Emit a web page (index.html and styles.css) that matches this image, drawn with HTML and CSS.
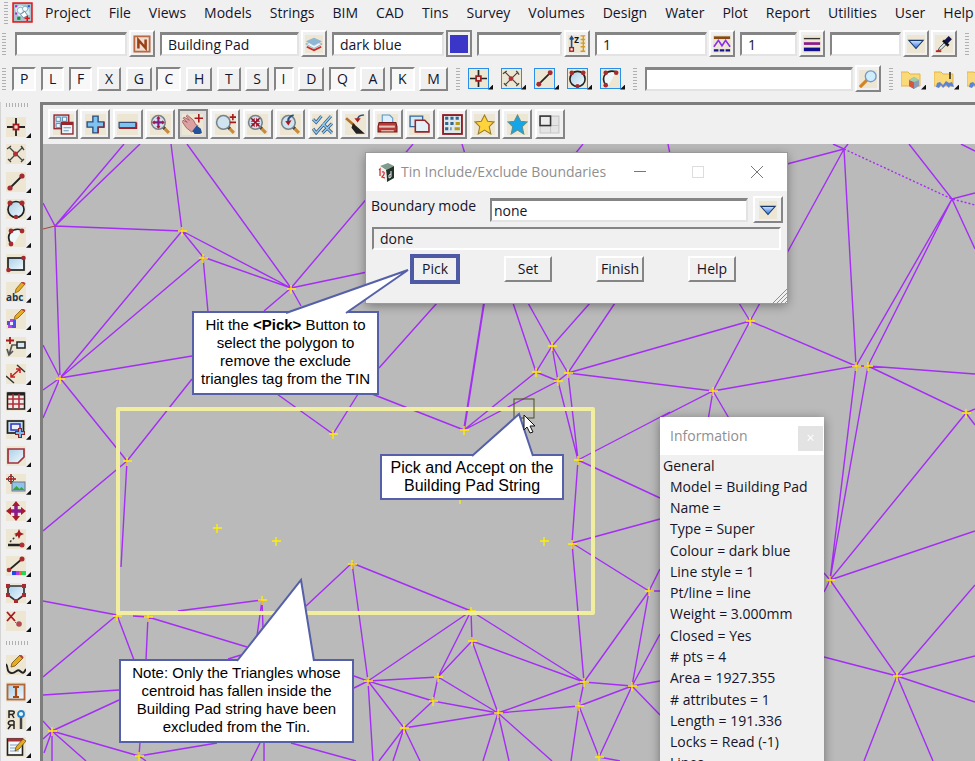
FILE: index.html
```html
<!DOCTYPE html>
<html lang="en">
<head>
<meta charset="utf-8">
<title>Tin Include/Exclude Boundaries</title>
<link rel="stylesheet" href="styles.css">
</head>
<body>
<svg class="defs" aria-hidden="true">
  <defs>
    <linearGradient id="glass" x1="0" y1="0" x2="1" y2="1"><stop offset="0" stop-color="#a9cfe8"/><stop offset="1" stop-color="#f2fafd"/></linearGradient>
    <linearGradient id="arrow" x1="0" y1="0" x2="0" y2="1"><stop offset="0" stop-color="#d4e6ff"/><stop offset="1" stop-color="#2b6fe0"/></linearGradient>
    <g id="bg"><rect width="20" height="20" fill="#ece6d2"/></g>
    <g id="lens"><path d="M12 12l6 6" stroke="#c98a3a" stroke-width="3"/><path d="M12 12l2 2" stroke="#444" stroke-width="3"/><circle cx="8" cy="8" r="6.5" fill="#cfe4f0" stroke="#77838c" stroke-width="1.5"/></g>
    <symbol id="i-app" viewBox="0 0 20 20"><rect x="1" y="1" width="18" height="18" fill="#a9c3cf" stroke="#e01818" stroke-width="1.5"/><path d="M3 6l4-3 5 1 4 3 1 5-5 2-6-1-2-3z" fill="#d8eef5"/><circle cx="8" cy="8" r="3" fill="#f4fbff" stroke="#5d8a9c" stroke-width=".6"/><circle cx="12.500" cy="6.500" r="2.500" fill="#f4fbff" stroke="#5d8a9c" stroke-width=".6"/><path d="M8 12l4-3 3 4-4 2z" fill="#fff" stroke="#3f6f86" stroke-width=".7"/><path d="M3 3h2v2H3zM3 10h2v2H3z" fill="#b11ec9"/><path d="M5 14h3v3H5z" fill="#15903a"/><path d="M14.500 13v5M12 15.500h5" stroke="#e51212" stroke-width="1.500"/><path d="M15 3h2v2h-2z" fill="#2b54d8"/></symbol>
    <symbol id="i-point" viewBox="0 0 20 20"><use href="#bg"/><path d="M10 1v18M1 10h18" stroke="#222" stroke-width="1.8"/><rect x="7.500" y="7.500" width="5" height="5" fill="#f4dcd0" stroke="#a8191f" stroke-width="1.8"/></symbol>
    <symbol id="i-cross" viewBox="0 0 20 20"><use href="#bg"/><path d="M3 3l14 14M17 3L3 17M1 5l4-3M15 2l3 4M2 15l3 3M15 18l3-3" stroke="#444" stroke-width="1.3"/><circle cx="9.500" cy="10" r="2.500" fill="#b03038"/></symbol>
    <symbol id="i-line" viewBox="0 0 20 20"><use href="#bg"/><path d="M4 16L16 4" stroke="#222" stroke-width="1.8"/><circle cx="4" cy="16" r="2.600" fill="#a52a32"/><circle cx="16" cy="4" r="2.600" fill="#a52a32"/></symbol>
    <symbol id="i-circle" viewBox="0 0 20 20"><use href="#bg"/><circle cx="10" cy="10.500" r="8" fill="url(#glass)" stroke="#222" stroke-width="1.700"/><circle cx="4" cy="4" r="2.500" fill="#a52a32"/><circle cx="16" cy="4" r="2.500" fill="#a52a32"/><circle cx="10" cy="18" r="2.200" fill="#a52a32"/></symbol>
    <symbol id="i-arc" viewBox="0 0 20 20"><use href="#bg"/><path d="M5 17C0 9 6 0 16 3L8 17z" fill="#eef7fa"/><path d="M5 17C-1 8 6 0 16 3" fill="none" stroke="#222" stroke-width="1.700"/><circle cx="5" cy="17" r="2.400" fill="#a52a32"/><circle cx="5" cy="4" r="2.400" fill="#a52a32"/><circle cx="16" cy="4" r="2.400" fill="#a52a32"/></symbol>
    <symbol id="i-rect" viewBox="0 0 20 20"><use href="#bg"/><rect x="2" y="4" width="16" height="12" fill="url(#glass)" stroke="#222" stroke-width="1.700"/><circle cx="2.500" cy="16" r="2.300" fill="#a52a32"/><circle cx="17.500" cy="4" r="2.300" fill="#a52a32"/></symbol>
    <symbol id="i-abc" viewBox="0 0 20 20"><use href="#bg"/><path d="M9 11l1-4 6-7 3 2-6 7z" fill="#e6ad20" stroke="#8a5c10" stroke-width=".8"/><path d="M16 0l3 2" stroke="#c04040" stroke-width="2"/><text x="0" y="19" class="glyph-abc">abc</text></symbol>
    <symbol id="i-paint" viewBox="0 0 20 20"><use href="#bg"/><path d="M8 11l1-4 7-7 3 2-7 7z" fill="#e6ad20" stroke="#8a5c10" stroke-width=".8"/><path d="M16 0l3 2" stroke="#c04040" stroke-width="2"/><path d="M1 12h4v4H1zM6 15h4v4H6z" fill="#5a4be0"/><path d="M4 10h4v4H4zM2 16h4v3H2z" fill="#c43ce0"/><path d="M7 11h3v4H7z" fill="#3a5be8"/><path d="M4 13h3v3H4z" fill="#e8eefc"/></symbol>
    <symbol id="i-leader" viewBox="0 0 20 20"><use href="#bg"/><path d="M4 0v7M0 3.500h8" stroke="#a8191f" stroke-width="1.800"/><path d="M11 8H6L3 18M1 12l2 6 4-4" fill="none" stroke="#555" stroke-width="1.700"/><rect x="11" y="5" width="8" height="6" fill="#d5e8f2" stroke="#222" stroke-width="1.500"/></symbol>
    <symbol id="i-dim" viewBox="0 0 20 20"><use href="#bg"/><path d="M0 12l8 7M11 1l8 7" stroke="#333" stroke-width="1.500"/><path d="M5 13L14 5M5 9v4h4M10 5h4v4" fill="none" stroke="#c22222" stroke-width="1.500"/></symbol>
    <symbol id="i-grid" viewBox="0 0 20 20"><use href="#bg"/><rect x="1.500" y="2" width="17" height="16" fill="#f2e9e6" stroke="#222" stroke-width="1.500"/><path d="M2 3h16" stroke="#222" stroke-width="3"/><path d="M2 8h16M2 13h16M7 3v15M13 3v15" stroke="#b0303c" stroke-width="1.600"/></symbol>
    <symbol id="i-view" viewBox="0 0 20 20"><use href="#bg"/><rect x="1.500" y="2" width="16" height="12" fill="#c7dcec" stroke="#222" stroke-width="1.700"/><rect x="5" y="5" width="9" height="6" fill="#e8f2fa" stroke="#2935bd" stroke-width="1.500"/><path d="M14 9v10M9 14h10" stroke="#902028" stroke-width="4"/><path d="M14 10v8M10 14h8" stroke="#74bff0" stroke-width="2"/></symbol>
    <symbol id="i-poly" viewBox="0 0 20 20"><use href="#bg"/><path d="M2 3h16v8l-6 6H2z" fill="url(#glass)" stroke="#a13038" stroke-width="1.700"/></symbol>
    <symbol id="i-image" viewBox="0 0 20 20"><use href="#bg"/><rect x="6" y="8" width="13" height="9" fill="#8dc4ef" stroke="#777"/><path d="M6.500 16l4-4 3 3 2-2 3 3z" fill="#36a43b"/><circle cx="5" cy="5" r="3" fill="none" stroke="#444"/><path d="M5 0v10M0 5h10" stroke="#a8191f" stroke-width="1.500"/></symbol>
    <symbol id="i-move" viewBox="0 0 20 20"><use href="#bg"/><path d="M10 3v14M3 10h14" stroke="#8c1a8a" stroke-width="3.500"/><path d="M10 0l4 5H6zM10 20l4-5H6zM0 10l5-4v8zM20 10l-5-4v8z" fill="#a8192f"/></symbol>
    <symbol id="i-drag" viewBox="0 0 20 20"><use href="#bg"/><path d="M2 16h14" stroke="#222" stroke-width="2.500"/><path d="M4 13l8-8" stroke="#333" stroke-dasharray="2 2" stroke-width="1.500"/><circle cx="16" cy="16" r="2.500" fill="#b03038"/><path d="M13 0l1.500 3.500L18 5l-3.500 1.500L13 10l-1.500-3.500L8 5l3.500-1.500z" fill="#a8191f"/></symbol>
    <symbol id="i-colour" viewBox="0 0 20 20"><use href="#bg"/><path d="M3 14L16 3" stroke="#222" stroke-width="1.700"/><circle cx="3" cy="14" r="2.300" fill="#a52a32"/><circle cx="16" cy="3" r="2.500" fill="#a52a32"/><path d="M6 15h4v4H6z" fill="#1d4de0"/><path d="M10 15h3v4h-3z" fill="#b040e8"/><path d="M13 15h3v4h-3z" fill="#f06a30"/><path d="M16 15h4v4h-4z" fill="#22d850"/></symbol>
    <symbol id="i-shape" viewBox="0 0 20 20"><use href="#bg"/><path d="M2 3h16v9l-8 6-8-6z" fill="url(#glass)" stroke="#333" stroke-width="1.700"/><path d="M0 1h4v4H0zM16 1h4v4h-4zM0 10h4v4H0zM16 10h4v4h-4zM8 16h4v4H8z" fill="#a52a32"/></symbol>
    <symbol id="i-delete" viewBox="0 0 20 20"><use href="#bg"/><path d="M1 1l8 9M9 1l-8 9" stroke="#a8191f" stroke-width="1.800"/><circle cx="13" cy="13" r="2.800" fill="#b04a50"/><path d="M10 11l-1 1" stroke="#666"/></symbol>
    <symbol id="i-draw" viewBox="0 0 20 20"><use href="#bg"/><path d="M0 9c3 5 0 8 5 9s6-5 9-2 4 2 6-2" fill="none" stroke="#222" stroke-width="1.800"/><path d="M5 12l1-4 8-8 3 3-8 8z" fill="#e6ad20" stroke="#6e4c10" stroke-width=".8"/><path d="M14 0l3 3" stroke="#b04040" stroke-width="2"/></symbol>
    <symbol id="i-text" viewBox="0 0 20 20"><use href="#bg"/><rect x="1.500" y="2.500" width="17" height="15" fill="url(#glass)" stroke="#b0653a" stroke-width="1.800"/><path d="M7 5h6M10 5v10M7 15h6" stroke="#a84812" stroke-width="2.200"/></symbol>
    <symbol id="i-find" viewBox="0 0 20 20"><use href="#bg"/><path d="M3 8V1h3c3 0 3 3 0 3.500H3M6 4.500L8 8M8 11C1 10 1 15 5 15h3v-4 8M5 15l-3 4" fill="none" stroke="#222" stroke-width="1.500"/><path d="M15 7v12" stroke="#444" stroke-width="2.500"/><circle cx="15" cy="4" r="3" fill="#e6f7ff" stroke="#1e83cf" stroke-width="1.800"/></symbol>
    <symbol id="i-note" viewBox="0 0 20 20"><use href="#bg"/><rect x="1.500" y="2" width="15" height="16" fill="#f6f9fb" stroke="#222" stroke-width="1.600"/><path d="M2 3h15" stroke="#a83038" stroke-width="3"/><path d="M4 8h9M4 11h7M4 14h9" stroke="#7fa4c0"/><path d="M9 14l1-4 7-8 3 2-7 8z" fill="#e6ad20" stroke="#6e4c10" stroke-width=".8"/></symbol>
    <symbol id="i-name" viewBox="0 0 20 20"><rect x="1.500" y="1.500" width="17" height="17" fill="#f0ddd0" stroke="#b76a45" stroke-width="2"/><path d="M6 15V5.500L14 14.500V5" fill="none" stroke="#9a3f14" stroke-width="2.800"/></symbol>
    <symbol id="i-layers" viewBox="0 0 20 20"><use href="#bg"/><path d="M2 13l8 4 8-4" fill="none" stroke="#d42828" stroke-width="2"/><path d="M1 10l9-4 9 4-9 5z" fill="#eaf3f8" stroke="#8fb0c4"/><path d="M1 7l9-4 9 4-9 5z" fill="#8fb6d2"/></symbol>
    <symbol id="i-z" viewBox="0 0 20 20"><use href="#bg"/><path d="M4 3v11M2 5l2-3 2 3" fill="none" stroke="#1d4f96" stroke-width="1.800"/><rect x="2" y="14" width="4" height="4" fill="#fff" stroke="#a8191f" stroke-width="1.500"/><text x="7" y="9" class="glyph-z">Z</text><path d="M17 1v18M14 1h5M14 5h5M14 9h5M14 13h5M14 18h5" stroke="#d59a28" stroke-width="1.500"/></symbol>
    <symbol id="i-style" viewBox="0 0 20 20"><use href="#bg"/><path d="M1 3h18" stroke="#8a4b12" stroke-width="3"/><path d="M1 13l5-7 4 6 4-6 5 7" fill="none" stroke="#8b2cf0" stroke-width="1.800"/><path d="M1 17h18" stroke="#14148f" stroke-width="2.500" stroke-dasharray="5 1.500"/></symbol>
    <symbol id="i-weight" viewBox="0 0 20 20"><use href="#bg"/><path d="M1 4h18" stroke="#333" stroke-width="1.500"/><path d="M1 9.500h18" stroke="#8e1a8c" stroke-width="3"/><path d="M1 16h18" stroke="#10108e" stroke-width="4"/></symbol>
    <symbol id="i-down" viewBox="0 0 20 20"><use href="#bg"/><path d="M2 6h16l-8 9z" fill="url(#arrow)" stroke="#17386e" stroke-width="1.200"/></symbol>
    <symbol id="i-dropper" viewBox="0 0 20 20"><use href="#bg"/><path d="M3 18l2-4 6-6 2 2-6 6z" fill="#d7eef2" stroke="#444"/><path d="M1 18h6" stroke="#c02020" stroke-width="2"/><path d="M9 6l6 6" stroke="#111" stroke-width="3"/><path d="M12 8l5-5" stroke="#14144a" stroke-width="5"/></symbol>
    <symbol id="i-search" viewBox="0 0 20 20"><use href="#bg"/><path d="M9 11l-8 8" stroke="#d78122" stroke-width="3.500"/><circle cx="13" cy="7" r="6" fill="#cdeefd" stroke="#7d96c4" stroke-width="1.500"/></symbol>
    <symbol id="i-folder" viewBox="0 0 20 20"><path d="M0 3h7l2 2h10v12H0z" fill="#f9d978" stroke="#e3b548"/><path d="M8 11l5-3 5 3v6l-5 3-5-3z" fill="#8a9db8"/><path d="M8 11l5 2v7l-5-3z" fill="#d9533e"/><path d="M8 11l5-3 5 3-5 2z" fill="#9ed0a8"/></symbol>
    <symbol id="i-folder-gear" viewBox="0 0 20 20"><path d="M0 3h7l2 2h10v12H0z" fill="#f9d978" stroke="#e3b548"/><path d="M16 3v7" stroke="#222" stroke-width="1.500"/><path d="M2 18l1-4 3-1 3 3 3-4 3 2 3-1 2 5-4-1-1 2-3-3-3 3-2-3-2 3z" fill="#5b84d8"/></symbol>
    <symbol id="i-windows" viewBox="0 0 20 20"><use href="#bg"/><rect x="1" y="1" width="14" height="13" fill="#bcd9ee" stroke="#96252d" stroke-width="1.300"/><path d="M3 3h4v4H3zM9 3h4v4H9zM3 9h4v4H3z" fill="#e9f4fb" stroke="#4a7da2" stroke-width=".8"/><rect x="8" y="8" width="11" height="11" fill="#eef6fb" stroke="#96252d" stroke-width="1.300"/><path d="M8 9.500h11" stroke="#96252d" stroke-width="2"/><path d="M10 13h7M10 16h5" stroke="#6a98b7"/></symbol>
    <symbol id="i-plus" viewBox="0 0 20 20"><use href="#bg"/><path d="M7.500 2h5v5.500H18v5h-5.500V18h-5v-5.500H2v-5h5.500z" fill="#7fc4f1" stroke="#2c4c7c" stroke-width="1.300"/><path d="M12.500 18V12.500H18V7.500" fill="none" stroke="#96252d" stroke-width="1.300"/></symbol>
    <symbol id="i-minus" viewBox="0 0 20 20"><use href="#bg"/><path d="M2 8h16v5H2z" fill="#7fc4f1" stroke="#34527c" stroke-width="1.200"/><path d="M2 13.500h16.500V8" fill="none" stroke="#96252d" stroke-width="1.500"/></symbol>
    <symbol id="i-zoom-all" viewBox="0 0 20 20"><use href="#bg"/><use href="#lens"/><path d="M8 3v10M3 8h10" stroke="#7c1d86" stroke-width="2"/><path d="M8 2l2 2.500H6zM8 14l2-2.500H6zM2 8l2.500-2v4zM14 8l-2.500-2v4z" fill="#a8193f"/></symbol>
    <symbol id="i-hand" viewBox="0 0 20 20"><use href="#bg"/><path d="M0 7l1-1 4 2-4-4 1-1 5 3-3-4 1-1 6 5 2 4 2 1-3 5-3 1-5-4z" fill="#dda0a0" stroke="#9b5b62" stroke-width=".8"/><path d="M10 16l4-5 4 3 1 4-2 1h-5z" fill="#23529a"/><path d="M16 0v8M12 4h8" stroke="#a8191f" stroke-width="1.500"/></symbol>
    <symbol id="i-zoom-pm" viewBox="0 0 20 20"><use href="#bg"/><use href="#lens"/><path d="M17 0v6M14 3h6M14 8h6" stroke="#a8191f" stroke-width="1.500"/></symbol>
    <symbol id="i-zoom-in" viewBox="0 0 20 20"><use href="#bg"/><use href="#lens"/><path d="M4 4l8 8M12 4l-8 8" stroke="#8a1430" stroke-width="1.400"/><path d="M7.300 3.500v3.800H3.500zM8.700 3.500v3.800h3.800zM7.300 12.500V8.700H3.500zM8.700 12.500V8.700h3.800z" fill="#a8142a"/></symbol>
    <symbol id="i-zoom-prev" viewBox="0 0 20 20"><use href="#bg"/><use href="#lens"/><path d="M13 1C9 2 7 5 8 9" fill="none" stroke="#2b4f80" stroke-width="1.800"/><path d="M5 7l3 4 3-5z" fill="#a8191f"/></symbol>
    <symbol id="i-ticks" viewBox="0 0 20 20"><use href="#bg"/><path d="M1 5l3 3 5-6M10 9l9 9M19 9l-9 9M1 14l3 4L18 2" fill="none" stroke="#34527c" stroke-width="2.800"/><path d="M1 5l3 3 5-6M10 9l9 9M19 9l-9 9M1 14l3 4L18 2" fill="none" stroke="#8fcdf4" stroke-width="1.400"/></symbol>
    <symbol id="i-brush" viewBox="0 0 20 20"><use href="#bg"/><path d="M1 4l8 7" stroke="#b5722c" stroke-width="2.500"/><path d="M8 10l9 8h-6l-4-5z" fill="#222" stroke="#222" stroke-width="1.500"/><path d="M18 1c-4 0-6 2-6 5" fill="none" stroke="#2b4f80" stroke-width="1.500"/><path d="M9 4l3 4 3-4z" fill="#b01a22"/></symbol>
    <symbol id="i-print" viewBox="0 0 20 20"><use href="#bg"/><path d="M5 9V1h7l3 3v5z" fill="#dcefff" stroke="#5395cf"/><path d="M2 8h16l1 4v5H1v-5z" fill="#b63a38" stroke="#741a1a"/><path d="M2 12h15" stroke="#e7c4b8" stroke-width="2"/><path d="M4 16h12" stroke="#f0ddd0"/></symbol>
    <symbol id="i-copy" viewBox="0 0 20 20"><use href="#bg"/><path d="M1 2h12v10H1z" fill="#d5e8f5" stroke="#34689a" stroke-width="1.300"/><path d="M6 6h9l4 4v7H6z" fill="#e3f0f7" stroke="#96252d" stroke-width="1.500"/></symbol>
    <symbol id="i-calc" viewBox="0 0 20 20"><rect x="1" y="1" width="18" height="18" fill="#dfe9ec" stroke="#8e1f26" stroke-width="1.800"/><path d="M3 4h14M3 9h8M3 14h6" stroke="#35658e" stroke-width="3" stroke-dasharray="3 2"/><path d="M13 9h4M12 14h5" stroke="#b8981c" stroke-width="3"/></symbol>
    <symbol id="i-star" viewBox="0 0 20 20"><use href="#bg"/><path d="M10 1l3 6 6 .6-4.500 4.400 1.500 7-6-3.700L4 19l1.500-7L1 7.600 7 7z" fill="#ffd43a" stroke="#9a7a2c"/></symbol>
    <symbol id="i-star-blue" viewBox="0 0 20 20"><use href="#bg"/><path d="M10 1l3 6 6 .6-4.500 4.400 1.500 7-6-3.700L4 19l1.500-7L1 7.600 7 7z" fill="#14a6e8" stroke="#5f8f8e"/></symbol>
    <symbol id="i-layout" viewBox="0 0 20 20"><path d="M1 2h18v16H1zM11 2v16M1 11h18" fill="#e4e4e4" stroke="#c5c5c5"/><rect x="1" y="2" width="10" height="9" fill="#ececec" stroke="#333" stroke-width="1.500"/></symbol>
    <path id="v" d="M-4 0h9M0-4v9"/>
  </defs>
</svg>

<header class="chrome">
  <nav class="menubar">
    <span class="grip"></span>
    <svg class="app-icon"><use href="#i-app"/></svg>
    <a href="#">Project</a><a href="#">File</a><a href="#">Views</a><a href="#">Models</a><a href="#">Strings</a><a href="#">BIM</a><a href="#">CAD</a><a href="#">Tins</a><a href="#">Survey</a><a href="#">Volumes</a><a href="#">Design</a><a href="#">Water</a><a href="#">Plot</a><a href="#">Report</a><a href="#">Utilities</a><a href="#">User</a><a href="#">Help</a>
  </nav>

  <div class="bar attributes">
    <span class="grip"></span>
    <div class="field w-name"><input aria-label="Name"><button class="btn" aria-label="Choose name"><svg><use href="#i-name"/></svg></button></div>
    <div class="field w-model"><input aria-label="Model" value="Building Pad"><button class="btn" aria-label="Choose model"><svg><use href="#i-layers"/></svg></button></div>
    <div class="field w-name"><input aria-label="Colour" value="dark blue"><button class="btn swatch-btn" aria-label="Choose colour"><span class="swatch"></span></button></div>
    <div class="field w-z"><input aria-label="Height"><button class="btn" aria-label="Choose height"><svg><use href="#i-z"/></svg></button></div>
    <div class="field w-name"><input aria-label="Line style" value="1"><button class="btn" aria-label="Choose line style"><svg><use href="#i-style"/></svg></button></div>
    <div class="field w-weight"><input aria-label="Weight" value="1"><button class="btn" aria-label="Choose weight"><svg><use href="#i-weight"/></svg></button></div>
    <div class="field w-tin"><input aria-label="Tinable"><button class="btn" aria-label="Choose tinable"><svg><use href="#i-down"/></svg></button><button class="btn" aria-label="Pick attributes"><svg><use href="#i-dropper"/></svg></button></div>
    <span class="grip"></span>
  </div>

  <div class="bar snaps">
    <span class="grip"></span>
    <div class="toggles">
      <button class="btn on">P</button><button class="btn on">L</button><button class="btn on">F</button><button class="btn">X</button><button class="btn">G</button><button class="btn on">C</button><button class="btn">H</button><button class="btn">T</button><button class="btn">S</button><button class="btn on">I</button><button class="btn">D</button><button class="btn on">Q</button><button class="btn">A</button><button class="btn on">K</button><button class="btn">M</button>
    </div>
    <span class="grip"></span>
    <div class="tools boxed">
      <button class="tool" aria-label="Point"><svg><use href="#i-point"/></svg></button><button class="tool" aria-label="Intersection"><svg><use href="#i-cross"/></svg></button><button class="tool" aria-label="Line"><svg><use href="#i-line"/></svg></button><button class="tool" aria-label="Circle"><svg><use href="#i-circle"/></svg></button><button class="tool" aria-label="Arc"><svg><use href="#i-arc"/></svg></button>
    </div>
    <span class="grip"></span>
    <div class="field w-search"><input aria-label="Search"><button class="btn" aria-label="Search"><svg><use href="#i-search"/></svg></button></div>
    <span class="grip"></span>
    <div class="tools">
      <button class="tool" aria-label="Project folder"><svg><use href="#i-folder"/></svg></button><button class="tool" aria-label="Settings folder"><svg><use href="#i-folder-gear"/></svg></button><button class="tool" aria-label="User folder"><svg><use href="#i-folder-gear"/></svg></button>
    </div>
  </div>
</header>

<main class="main">
  <aside class="sidebar">
    <span class="grip flat"></span>
    <div class="side-group draw-tools">
      <button class="tool" aria-label="Point"><svg><use href="#i-point"/></svg></button>
      <button class="tool" aria-label="Intersection"><svg><use href="#i-cross"/></svg></button>
      <button class="tool" aria-label="Line"><svg><use href="#i-line"/></svg></button>
      <button class="tool" aria-label="Circle"><svg><use href="#i-circle"/></svg></button>
      <button class="tool" aria-label="Arc"><svg><use href="#i-arc"/></svg></button>
      <button class="tool" aria-label="Rectangle"><svg><use href="#i-rect"/></svg></button>
      <button class="tool" aria-label="Text"><svg><use href="#i-abc"/></svg></button>
      <button class="tool" aria-label="Symbol"><svg><use href="#i-paint"/></svg></button>
      <button class="tool" aria-label="Leader"><svg><use href="#i-leader"/></svg></button>
      <button class="tool" aria-label="Dimension"><svg><use href="#i-dim"/></svg></button>
      <button class="tool" aria-label="Table"><svg><use href="#i-grid"/></svg></button>
      <button class="tool" aria-label="View frame"><svg><use href="#i-view"/></svg></button>
      <button class="tool" aria-label="Polygon"><svg><use href="#i-poly"/></svg></button>
      <button class="tool" aria-label="Image"><svg><use href="#i-image"/></svg></button>
      <button class="tool" aria-label="Move"><svg><use href="#i-move"/></svg></button>
      <button class="tool" aria-label="Drag vertex"><svg><use href="#i-drag"/></svg></button>
      <button class="tool" aria-label="Segment colour"><svg><use href="#i-colour"/></svg></button>
      <button class="tool" aria-label="Shape"><svg><use href="#i-shape"/></svg></button>
      <button class="tool" aria-label="Delete vertex"><svg><use href="#i-delete"/></svg></button>
    </div>
    <span class="grip flat"></span>
    <div class="side-group edit-tools">
      <button class="tool" aria-label="Freehand"><svg><use href="#i-draw"/></svg></button>
      <button class="tool" aria-label="Text edit"><svg><use href="#i-text"/></svg></button>
      <button class="tool" aria-label="Find"><svg><use href="#i-find"/></svg></button>
      <button class="tool" aria-label="Notes"><svg><use href="#i-note"/></svg></button>
    </div>
  </aside>

  <section class="view">
    <div class="view-bar">
      <button class="btn" aria-label="View menu"><svg><use href="#i-windows"/></svg></button>
      <button class="btn" aria-label="Add model"><svg><use href="#i-plus"/></svg></button>
      <button class="btn" aria-label="Remove model"><svg><use href="#i-minus"/></svg></button>
      <button class="btn" aria-label="Fit"><svg><use href="#i-zoom-all"/></svg></button>
      <button class="btn active" aria-label="Pan"><svg><use href="#i-hand"/></svg></button>
      <button class="btn" aria-label="Zoom"><svg><use href="#i-zoom-pm"/></svg></button>
      <button class="btn" aria-label="Shrink"><svg><use href="#i-zoom-in"/></svg></button>
      <button class="btn" aria-label="Previous"><svg><use href="#i-zoom-prev"/></svg></button>
      <button class="btn" aria-label="Toggle"><svg><use href="#i-ticks"/></svg></button>
      <button class="btn" aria-label="Redraw"><svg><use href="#i-brush"/></svg></button>
      <button class="btn" aria-label="Plot"><svg><use href="#i-print"/></svg></button>
      <button class="btn" aria-label="Copy view"><svg><use href="#i-copy"/></svg></button>
      <button class="btn" aria-label="Settings"><svg><use href="#i-calc"/></svg></button>
      <button class="btn" aria-label="Favourites"><svg><use href="#i-star"/></svg></button>
      <button class="btn" aria-label="User favourites"><svg><use href="#i-star-blue"/></svg></button>
      <button class="btn" aria-label="Layout"><svg><use href="#i-layout"/></svg></button>
    </div>

    <div class="canvas">
      <svg class="drawing" viewBox="43 144 932 617" preserveAspectRatio="xMinYMin slice" aria-hidden="true">
        <path class="tin" d="M55 226L43 203M55 226L124 144M55 226L140 144M55 226L182 231M55 226L60 378M182 231L171 144M182 231L203 257M182 231L291 288M182 231L60 378M203 257L291 288M203 257L60 378M203 257L208 312M291 288L187 144M291 288L413 144M291 288L410 263M291 288L264 311M291 288L301 306M60 378L43 345M60 378L43 390M60 378L43 418M60 378L127 461M60 378L192 356M192 379L127 461L43 531M127 461L121 567M277 394L333 434L358 394M372 394L464 430M437 303L379 368M117 615L43 601M117 615L43 677M117 615L134 660M133 616L148 617L146 660M148 617L247 647M178 611L262 600L257 636M262 600L263 628M228 659L241 655M43 695L119 690M52 731L119 700M52 731L43 721M52 731L43 739M52 731L44 753M52 731L52 761M52 731L86 761M52 731L139 756L140 742M139 756L217 743M139 756L146 761M260 743L251 761M264 743V761M291 743L356 761M352 563L306 606M352 563L471 611M352 563L368 681M354 676L368 681L354 688M462 144L465 154M583 144L575 154M668 144L670 154M513 303L536 372L552 346L528 303M590 303L552 346L568 373L615 303M552 346L558 381L536 372M558 381L568 373M536 372L464 430L558 381L578 460L568 373M568 373L750 321L739 303M750 321L760 303M750 321L713 391L568 373M750 321L856 366L713 391L660 418M713 391L708 420M713 391L730 420M578 460L670 412M578 460L660 498M578 460L572 543L660 519M572 543L649 591L660 569M572 543L584 682L649 591L632 686M649 591L660 591M471 611L368 681M471 611L438 677M471 611L472 641L438 677M471 611L584 682L472 641L498 713L438 677L368 681M438 677L433 701L368 681L404 728L433 701L498 713L404 728M368 681L373 761M404 728L379 761M404 728L393 761M404 728L420 761M498 713L584 682M498 713L579 706L584 682L632 686L579 706M498 713L483 761M498 713L509 761M498 713L552 761M579 706L571 761M579 706L599 757L632 686M632 686L660 681M632 686L660 634M632 686L660 715M599 757L620 761M844 149L833 144M844 149L848 144M844 149L787 164M844 149L787 253M844 149L856 366L952 199L868 366M856 366H868M909 144L952 199L975 193M952 199L975 249M961 144L975 151M868 366L975 374M868 366L966 413L975 409M966 413L975 425M966 413L830 580L856 366M868 366L830 580M830 580L975 531M824 573L830 580L824 592M830 580L897 676L824 657M897 676L975 585M897 676L975 656M897 676L975 702M897 676L864 761M897 676L933 761"/>
        <path class="tin heavy" d="M484 303L464 430"/>
        <path class="tin dotted" d="M844 149L952 199L975 205"/>
        <path class="brown" d="M43 229L55 226"/>
        <g class="vertex">
          <use href="#v" x="182" y="231"/><use href="#v" x="203" y="258"/><use href="#v" x="291" y="289"/><use href="#v" x="60" y="379"/><use href="#v" x="127" y="461"/><use href="#v" x="333" y="434"/><use href="#v" x="217" y="528"/><use href="#v" x="276" y="541"/><use href="#v" x="262" y="600"/><use href="#v" x="352" y="564"/><use href="#v" x="117" y="616"/><use href="#v" x="148" y="617"/><use href="#v" x="52" y="731"/><use href="#v" x="139" y="756"/><use href="#v" x="368" y="681"/><use href="#v" x="464" y="430"/><use href="#v" x="460" y="499"/><use href="#v" x="544" y="541"/><use href="#v" x="572" y="544"/><use href="#v" x="578" y="460"/><use href="#v" x="552" y="346"/><use href="#v" x="536" y="372"/><use href="#v" x="558" y="381"/><use href="#v" x="568" y="373"/><use href="#v" x="750" y="321"/><use href="#v" x="713" y="391"/><use href="#v" x="856" y="366"/><use href="#v" x="868" y="366"/><use href="#v" x="966" y="413"/><use href="#v" x="830" y="580"/><use href="#v" x="897" y="676"/><use href="#v" x="649" y="591"/><use href="#v" x="471" y="611"/><use href="#v" x="472" y="641"/><use href="#v" x="438" y="677"/><use href="#v" x="433" y="701"/><use href="#v" x="404" y="728"/><use href="#v" x="498" y="713"/><use href="#v" x="584" y="682"/><use href="#v" x="579" y="706"/><use href="#v" x="632" y="686"/><use href="#v" x="599" y="757"/>
        </g>
        <rect class="pad" x="118" y="409" width="475" height="204"/>
        <rect class="cursor-box" x="514" y="399" width="20" height="19"/>
      </svg>

      <form class="window dialog">
        <div class="title">
          <svg class="cube" viewBox="0 0 16 19"><path d="M2 3l8-3 6 3-8 4z" fill="#7f9c8c"/><path d="M8 7l8-4v12l-7 4z" fill="#23332c"/><path d="M2 3l6 4 1 12-7-5z" fill="#f1f1f1"/><path d="M1 7l1-1v7M4 9c3-1 3 2 0 5l3 1" fill="none" stroke="#d22" stroke-width="1.200"/><path d="M13 8v6M13 11l-2 1v3l2-1" fill="none" stroke="#e6eee9"/></svg>
          <h1>Tin Include/Exclude Boundaries</h1>
          <svg class="caption" viewBox="0 0 132 16" aria-hidden="true"><path d="M2 7.500h12" stroke="#777"/><rect x="60.500" y="2.500" width="11" height="11" fill="none" stroke="#ddd"/><path d="M119 2l12 12M131 2l-12 12" stroke="#777"/></svg>
        </div>
        <div class="mode-row">
          <label for="mode">Boundary mode</label>
          <input id="mode" value="none">
          <button type="button" class="btn" aria-label="Boundary modes"><svg><use href="#i-down"/></svg></button>
        </div>
        <output class="status">done</output>
        <div class="actions">
          <button type="button" class="btn picked">Pick</button>
          <button type="button" class="btn">Set</button>
          <button type="button" class="btn">Finish</button>
          <button type="button" class="btn">Help</button>
        </div>
        <svg class="sizer" viewBox="0 0 14 14" aria-hidden="true"><path d="M0 14L14 0M4 14L14 4M8 14l6-6M12 14l2-2" stroke="#8d8d8d"/></svg>
      </form>

      <section class="window info">
        <div class="title"><h2>Information</h2><button class="close" aria-label="Close">×</button></div>
        <ul>
          <li class="head">General</li><li>Model = Building Pad</li><li>Name =</li><li>Type = Super</li><li>Colour = dark blue</li><li>Line style = 1</li><li>Pt/line = line</li><li>Weight = 3.000mm</li><li>Closed = Yes</li><li># pts = 4</li><li>Area = 1927.355</li><li># attributes = 1</li><li>Length = 191.336</li><li>Locks = Read (-1)</li><li>Lines</li>
        </ul>
      </section>

      <p class="callout pick-note">Hit the <b>&lt;Pick&gt;</b> Button to<br>select the polygon to<br>remove the exclude<br>triangles tag from the TIN</p>
      <p class="callout accept-note">Pick and Accept on the<br>Building Pad String</p>
      <p class="callout tin-note">Note: Only the Triangles whose<br>centroid has fallen inside the<br>Building Pad string have been<br>excluded from the Tin.</p>

      <svg class="drawing tails" viewBox="43 144 932 617" preserveAspectRatio="xMinYMin slice" aria-hidden="true">
        <path d="M286 313L408 270L346 313"/>
        <path d="M472 456L519 414L533 456"/>
        <path d="M237 661L301 580L314 661"/>
        <path class="pointer" d="M524 415v15l3-3 3 6 3-1-3-6h5z"/>
      </svg>
    </div>
  </section>
</main>
</body>
</html>
```
FILE: styles.css
```css
* { box-sizing: border-box; }

body {
  margin: 0;
  height: 100vh;
  overflow: hidden;
  display: flex;
  flex-direction: column;
  background: #f0f0f0;
  color: #14142a;
  font: 14px/20px "Open Sans", "Noto Sans", sans-serif;
}

.defs { position: absolute; width: 0; height: 0; }
button, input { font: inherit; color: inherit; margin: 0; min-width: 0; }
svg { display: block; flex: none; }

/* Shared controls */
.grip {
  display: block;
  flex: none;
  width: 4px;
  height: 22px;
  background: repeating-linear-gradient(#b0b0b0 0 1px, #f0f0f0 1px 3px);
}
.grip.flat {
  width: 24px;
  height: 4px;
  margin-left: 5px;
  background: repeating-linear-gradient(90deg, #b0b0b0 0 1px, #f0f0f0 1px 3px);
}

.btn {
  flex: none;
  display: flex;
  align-items: center;
  justify-content: center;
  width: 26px;
  height: 27px;
  padding: 0;
  background: #f0f0f0;
  border: 2px solid;
  border-color: #fff #858585 #858585 #fff;
}
.btn svg { width: 18px; height: 18px; }
.btn.on { background: #f8f8f8; border-color: #858585 #fff #fff #858585; }
.btn.active { background: #ddd; border-color: #858585; }

input {
  height: 24px;
  padding: 0 6px;
  background: #fff;
  border: 2px solid;
  border-color: #858585 #e3e3e3 #e3e3e3 #858585;
  border-top-width: 3px;
  border-radius: 0;
  outline: 0;
}

.tool {
  position: relative;
  flex: none;
  width: 25px;
  height: 22px;
  padding: 0;
  border: 0;
  background: none;
}
.tool svg { width: 20px; height: 20px; }
.tool::after {
  content: "";
  position: absolute;
  right: 0;
  bottom: 0;
  width: 5px;
  height: 5px;
  background: #111;
  clip-path: polygon(100% 0, 100% 100%, 0 100%);
}
.boxed svg { width: 21px; height: 21px; border: 1px solid #2a8fe8; }

.glyph-abc { font: bold 10px "Open Sans", sans-serif; fill: #1d3550; }
.glyph-z { font: bold 9px "Open Sans", sans-serif; fill: #111; }

/* Menu and tool rows */
.menubar { display: flex; align-items: center; height: 25px; padding-left: 4px; white-space: nowrap; }
.menubar a { color: inherit; text-decoration: none; margin-right: 18px; }
.app-icon { width: 21px; height: 21px; margin: 0 12px 0 4px; }

.bar { display: flex; align-items: center; }
.attributes { height: 37px; padding-left: 2px; gap: 5px; }
.attributes .grip:first-child { margin-right: 4px; }
.snaps { height: 40px; padding: 0 0 7px 2px; gap: 8px; }
.field { flex: none; display: flex; align-items: center; gap: 2px; }
.field input { flex: 1; }
.w-name { width: 140px; }
.w-model { width: 167px; }
.w-z { width: 113px; }
.w-weight { width: 85px; }
.w-tin { width: 127px; margin-right: 3px; }
.w-search { width: 236px; }
.swatch-btn { border-color: #858585; }
.swatch { width: 18px; height: 18px; background: #3a37c8; }

.toggles { flex: none; display: flex; gap: 2px; width: 436px; justify-content: space-between; margin-left: -2px; }
.toggles .btn { width: auto; height: 24px; padding: 0 6px; }
.tools { flex: none; display: flex; gap: 8px; }

/* Work area */
.main { flex: 1; min-height: 0; display: flex; }
.sidebar { flex: none; width: 40px; padding-top: 1px; border-left: 1px solid #d4d4d4; }
.side-group { display: flex; flex-direction: column; justify-content: space-between; margin-left: 5px; }
.draw-tools { height: 516px; margin-top: 9px; margin-bottom: 9px; }
.edit-tools { height: 104px; margin-top: 9px; }

.view {
  flex: 1;
  min-width: 0;
  display: flex;
  flex-direction: column;
  border-top: 3px solid #7d7d7d;
  border-left: 3px solid #7d7d7d;
}
.view-bar { display: flex; justify-content: space-between; width: 525px; height: 39px; padding: 4px 3px 5px 5px; }
.view-bar .btn { width: 30px; height: 30px; }
.view-bar svg { width: 21px; height: 21px; }

.canvas { position: relative; flex: 1; min-height: 0; overflow: hidden; background: #bababa; }
.drawing { position: absolute; inset: 0; width: 100%; height: 100%; }
.tin { fill: none; stroke: #a52df5; stroke-width: 1.4; }
.heavy { stroke-width: 2; }
.dotted { stroke-dasharray: 2 2; }
.brown { stroke: #a0483c; }
.vertex { stroke: #fff000; stroke-width: 1.3; }
.pad { fill: none; stroke: #f1ee9f; stroke-width: 4; stroke-linejoin: round; }
.cursor-box { fill: none; stroke: #4d4b1d; }

/* Floating windows */
.window { position: absolute; background: #f0f0f0; box-shadow: 0 2px 10px rgba(0, 0, 0, .4); }
.window .title { display: flex; align-items: center; height: 38px; background: #fff; color: #8f8f8f; }
.window h1, .window h2 { margin: 0; font-size: 14px; font-weight: 400; white-space: nowrap; }

.dialog { left: 323px; top: 9px; width: 421px; height: 150px; outline: 1px solid #9a9a9a; }
.cube { width: 16px; height: 19px; margin: 0 7px 0 12px; }
.dialog h1 { flex: 1; }
.caption { width: 132px; height: 16px; margin-right: 23px; }
.mode-row { display: flex; align-items: center; margin-top: 5px; padding: 0 4px 0 5px; }
.mode-row label { width: 119px; align-self: flex-start; }
.mode-row input { flex: 1; padding: 0 2px; margin-right: 5px; }
.mode-row .btn { width: 30px; }
.status {
  display: block;
  height: 23px;
  margin: 4px 6px 0;
  padding: 0 6px;
  line-height: 19px;
  border: 2px solid;
  border-color: #858585 #fff #fff #858585;
}
.actions { display: flex; justify-content: space-between; align-items: center; height: 31px; margin-top: 3px; padding: 0 51px 0 44px; }
.actions .btn { width: 48px; height: 26px; }
.actions .picked { width: 50px; height: 30px; border: 4px solid #4f5aa5; }
.sizer { position: absolute; right: 0; bottom: 0; width: 14px; height: 14px; }

.info { left: 617px; top: 273px; width: 164px; }
.info .title { justify-content: space-between; padding-left: 10px; }
.close { width: 25px; height: 25px; margin: 4px 1px 0 0; padding: 0; border: 0; background: #e3e3e3; color: #fff; }
.info ul { display: grid; grid-auto-rows: 1fr; align-items: center; height: 319px; margin: 0; padding: 0; list-style: none; white-space: nowrap; }
.info li { padding-left: 10px; }
.info .head { padding-left: 3px; }

/* Annotations */
.callout {
  position: absolute;
  margin: 0;
  padding: 3px 0;
  background: #fff;
  border: 2px solid #5560a8;
  color: #000;
  text-align: center;
  white-space: nowrap;
  font: 15px/18px "Liberation Sans", sans-serif;
}
.pick-note { left: 149px; top: 167px; width: 187px; height: 84px; }
.accept-note { left: 337px; top: 310px; width: 184px; height: 46px; font-size: 16px; }
.tin-note { left: 76px; top: 515px; width: 235px; height: 84px; }
.tails { pointer-events: none; fill: #fff; stroke: #5560a8; stroke-width: 2; }
.pointer { stroke: #111; stroke-width: 1; }
```
